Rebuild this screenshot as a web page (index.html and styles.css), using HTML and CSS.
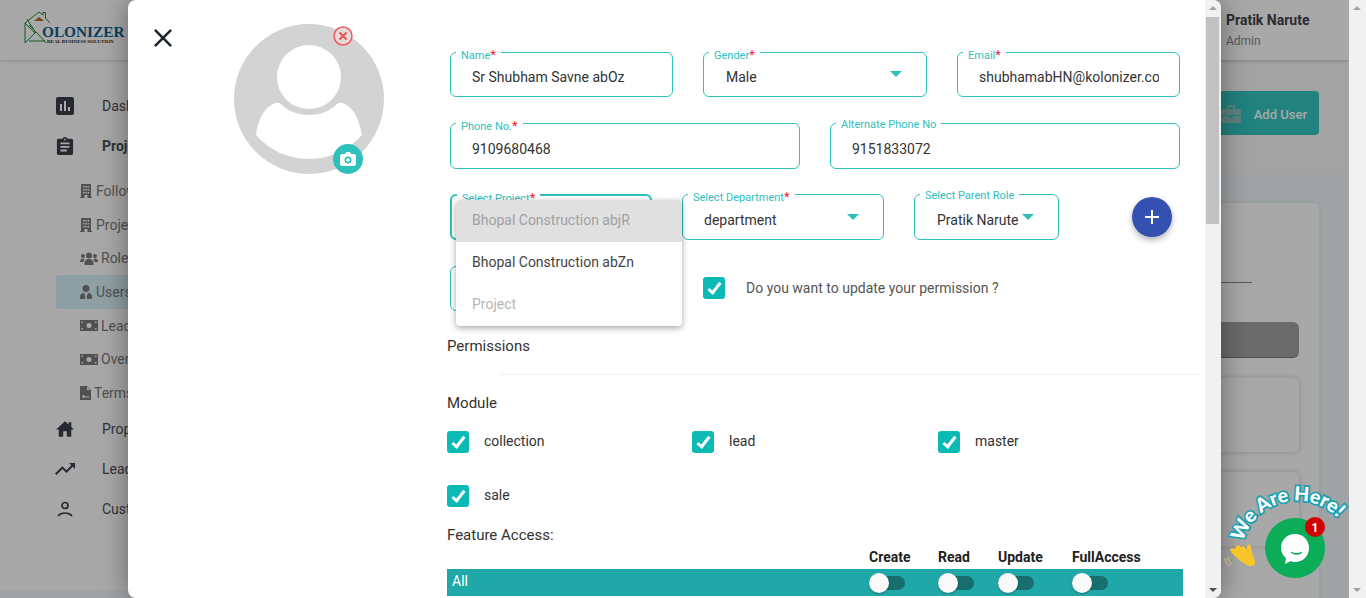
FILE: index.html
```html
<!DOCTYPE html>
<html>
<head>
    <title>Kolonizer - Users</title>
    <link rel="stylesheet" href="styles.css">
</head>
<body>
<svg class="sprite" width="0" height="0">
    <symbol id="i-chart" viewBox="3 3 18 18"><path d="M19 3H5c-1.1 0-2 .9-2 2v14c0 1.1.9 2 2 2h14c1.1 0 2-.9 2-2V5c0-1.1-.9-2-2-2zM9 17H7v-7h2v7zm4 0h-2V7h2v10zm4 0h-2v-4h2v4z"/></symbol>
    <symbol id="i-clip" viewBox="3 1 18 20"><path d="M19 3h-4.18C14.4 1.84 13.3 1 12 1c-1.3 0-2.4.84-2.82 2H5c-1.1 0-2 .9-2 2v14c0 1.1.9 2 2 2h14c1.1 0 2-.9 2-2V5c0-1.1-.9-2-2-2zm-7 0c.55 0 1 .45 1 1s-.45 1-1 1-1-.45-1-1 .45-1 1-1zm2 14H7v-2h7v2zm3-4H7v-2h10v2zm0-4H7V7h10v2z"/></symbol>
    <symbol id="i-home" viewBox="2 3 20 17"><path d="M10 20v-6h4v6h5v-8h3l-3-2.7V4h-3v2.6L12 3 2 12h3v8z"/></symbol>
    <symbol id="i-trend" viewBox="2 6 20 12"><path d="M16 6l2.29 2.29-4.88 4.88-4-4L2 16.59 3.41 18l6-6 4 4 6.3-6.29L22 12V6z"/></symbol>
    <symbol id="i-building" viewBox="0 0 12 14"><path fill-rule="evenodd" d="M1 0h10v13h1v1H0v-1h1zM3 2v1.500h1.500V2zm2.300 0v1.500h1.500V2zm2.300 0v1.500h1.500V2zM3 5v1.500h1.500V5zm2.300 0v1.500h1.500V5zm2.300 0v1.500h1.500V5zM3 8v1.500h1.500V8zm2.300 0v1.500h1.500V8zm2.300 0v1.500h1.500V8zM4.500 11v3h3v-3z"/></symbol>
    <symbol id="i-users" viewBox="0 0 18 13"><circle cx="9" cy="3.500" r="3"/><circle cx="3" cy="4" r="2"/><circle cx="15" cy="4" r="2"/><path d="M4.500 13v-2c0-2.500 2-4 4.500-4s4.500 1.500 4.500 4v2zM0 10c0-2 1-3.500 3-3.500.7 0 1.200.2 1.700.5-.8 1-1.200 2-1.200 3zM18 10c0-2-1-3.500-3-3.500-.7 0-1.200.2-1.700.5.800 1 1.200 2 1.200 3z"/></symbol>
    <symbol id="i-tie" viewBox="0 0 12 14"><circle cx="6" cy="3.500" r="3.500"/><path d="M0 14v-2c0-2.500 1.500-4 4-4l1.300 3.500L4.800 14zM12 14v-2c0-2.500-1.500-4-4-4l-1.300 3.500.5 2.500z"/></symbol>
    <symbol id="i-money" viewBox="0 0 18 11"><path fill-rule="evenodd" d="M0 0h18v11H0zM9 3a2.500 2.500 0 1 0 0 5 2.500 2.500 0 0 0 0-5zM1.500 1.500v1.500h1.500V1.500zm13.500 0v1.500h1.500V1.500zM1.500 8v1.500h1.500V8zm13.500 0v1.500h1.500V8z"/></symbol>
    <symbol id="i-file" viewBox="0 0 11 14"><path fill-rule="evenodd" d="M0 0h7l4 4v10H0zM7 .800V4h3.200zM2 10.500v1h7v-1H5L3.500 8.500z"/></symbol>
</svg>

<div class="page">
    <div class="viewport">
        <div class="app">
            <header class="topbar">
                <svg class="logo" width="104" height="34" viewBox="0 0 104 34">
                    <path d="M1 32V12L15 1l4 3V1.500h2.500V7L26 12" fill="none" stroke="#1d8a3c" stroke-width="1"/>
                    <path d="M1 12l10 10L1 32M5 30h16M5 14l9 9 8 9M3 8l9 14" fill="none" stroke="#1d8a3c" stroke-width="1"/>
                    <path d="M10 10l5-4 5 4z" fill="#a9722a"/>
                    <text x="18" y="26" class="logo-name">OLONIZER</text>
                    <text x="23" y="31.500" class="logo-tag">REAL BUSINESS SOLUTION</text>
                </svg>
                <div class="user-box">
                    <div class="user-name">Pratik Narute</div>
                    <div class="user-role">Admin</div>
                </div>
            </header>
            <div class="app-body">
                <nav class="sidebar">
                    <a class="nav-item"><svg class="nav-icon"><use href="#i-chart"/></svg>Dashboard</a>
                    <a class="nav-item active"><svg class="nav-icon"><use href="#i-clip"/></svg>Projects</a>
                    <a class="sub-item"><svg class="sub-icon narrow"><use href="#i-building"/></svg>Follow Up</a>
                    <a class="sub-item"><svg class="sub-icon narrow"><use href="#i-building"/></svg>Projects</a>
                    <a class="sub-item"><svg class="sub-icon"><use href="#i-users"/></svg>Roles</a>
                    <a class="sub-item current"><svg class="sub-icon narrow"><use href="#i-tie"/></svg>Users</a>
                    <a class="sub-item"><svg class="sub-icon"><use href="#i-money"/></svg>Leads</a>
                    <a class="sub-item"><svg class="sub-icon"><use href="#i-money"/></svg>Overview</a>
                    <a class="sub-item"><svg class="sub-icon file"><use href="#i-file"/></svg>Terms</a>
                    <a class="nav-item"><svg class="nav-icon"><use href="#i-home"/></svg>Properties</a>
                    <a class="nav-item"><svg class="nav-icon trend"><use href="#i-trend"/></svg>Leads</a>
                    <a class="nav-item">
                        <svg class="nav-icon person" viewBox="0 0 18 18" fill="none" stroke="currentColor" stroke-width="1.700"><circle cx="9" cy="5.500" r="3"/><path d="M2 16c2-2.500 4.500-3 7-3s5 .5 7 3"/></svg>
                        Customers
                    </a>
                </nav>
                <main class="main">
                    <div class="toolbar">
                        <button class="add-user">
                            <svg width="20" height="18" viewBox="0 0 20 18" fill="#8fc4bf"><path fill-rule="evenodd" d="M7 0h6l1 1v3h5l1 1v5H0V5l1-1h5V1zm1 2v2h4V2zM0 11h8v2h4v-2h8v6l-1 1H1l-1-1z"/></svg>
                            Add User
                        </button>
                    </div>
                    <section class="panel">
                        <div class="panel-line"></div>
                        <div class="panel-bar"></div>
                        <div class="panel-card"></div>
                        <div class="panel-card"></div>
                    </section>
                </main>
            </div>
        </div>

        <div class="overlay">
            <div class="modal">
                <div class="modal-scroll">
                    <div class="modal-left">
                        <svg class="close-btn" width="18" height="18" viewBox="5 5 14 14" fill="#1d2733"><path d="M19 6.410L17.590 5 12 10.590 6.410 5 5 6.410 10.590 12 5 17.590 6.410 19 12 13.410 17.590 19 19 17.590 13.410 12z"/></svg>
                        <div class="avatar">
                            <svg width="150" height="150" viewBox="0 0 150 150">
                                <circle cx="75" cy="75" r="75" fill="#d3d3d3"/>
                                <circle cx="75" cy="53" r="32" fill="#fff"/>
                                <path d="M22 111c2-14 7-28 20-32 3-1 5 1 7 3 7 6 16 9 26 9s19-3 26-9c2-2 4-4 7-3 13 4 17 18 20 32-13 15-32 24-53 24s-40-9-53-24z" fill="#fff"/>
                            </svg>
                            <span class="avatar-remove">
                                <svg width="20" height="20" viewBox="0 0 20 20"><circle cx="10" cy="10" r="9" fill="#e4dcdc" stroke="#f0595e" stroke-width="1.500"/><path d="M6.500 6.500l7 7m0-7l-7 7" stroke="#e8505a" stroke-width="2"/></svg>
                            </span>
                            <span class="avatar-camera">
                                <svg width="16" height="14" viewBox="0 0 16 14"><path d="M1.500 2H5l1-2h4l1 2h3.500L16 3.500v9L14.500 14h-13L0 12.500v-9z" fill="#fff"/><circle cx="8" cy="8" r="3.500" fill="#2fc0bc"/><path d="M8 6v4M6 8h4" stroke="#fff" stroke-width="1.300"/></svg>
                            </span>
                        </div>
                    </div>

                    <form class="user-form">
                        <div class="form-row first">
                            <fieldset class="field w-name req">
                                <legend>Name<b>*</b></legend>
                                <input class="field-input" type="text" value="Sr Shubham Savne abOz">
                            </fieldset>
                            <fieldset class="field w-gender req">
                                <legend>Gender<b>*</b></legend>
                                <div class="field-select pad-23">Male<span class="caret"></span></div>
                            </fieldset>
                            <fieldset class="field w-email req">
                                <legend>Email<b>*</b></legend>
                                <input class="field-input" type="text" value="shubhamabHN@kolonizer.com">
                            </fieldset>
                        </div>
                        <div class="form-row tall">
                            <fieldset class="field w-half req">
                                <legend>Phone No.<b>*</b></legend>
                                <input class="field-input" type="text" value="9109680468">
                            </fieldset>
                            <fieldset class="field w-half">
                                <legend>Alternate Phone No</legend>
                                <input class="field-input" type="text" value="9151833072">
                            </fieldset>
                        </div>
                        <div class="form-row tall">
                            <fieldset class="field w-select req focused">
                                <legend>Select Project<b>*</b></legend>
                            </fieldset>
                            <fieldset class="field w-select req">
                                <legend>Select Department<b>*</b></legend>
                                <div class="field-select">department<span class="caret"></span></div>
                            </fieldset>
                            <fieldset class="field w-parent">
                                <legend>Select Parent Role</legend>
                                <div class="field-select pad-23">Pratik Narute<span class="caret"></span></div>
                            </fieldset>
                            <button class="fab" type="button">
                                <svg width="24" height="24" viewBox="0 0 24 24" fill="#fff"><path d="M19 13h-6v6h-2v-6H5v-2h6V5h2v6h6v2z"/></svg>
                            </button>
                        </div>
                        <div class="form-row last">
                            <fieldset class="field w-select"><legend></legend></fieldset>
                            <label class="check update-check"><span class="box"></span>Do you want to update your permission ?</label>
                        </div>

                        <h4 class="perm-title">Permissions</h4>
                        <hr class="perm-line">
                        <h4 class="module-title">Module</h4>
                        <div class="module-grid">
                            <label class="check"><span class="box"></span>collection</label>
                            <label class="check"><span class="box"></span>lead</label>
                            <label class="check"><span class="box"></span>master</label>
                            <label class="check"><span class="box"></span>sale</label>
                        </div>
                        <h4 class="feature-title">Feature Access:</h4>
                        <div class="access-head">
                            <span></span><span>Create</span><span>Read</span><span>Update</span><span>FullAccess</span>
                        </div>
                        <div class="access-row">
                            <span class="access-name">All</span>
                            <span class="toggle"></span><span class="toggle"></span><span class="toggle"></span><span class="toggle"></span>
                        </div>
                    </form>

                    <ul class="menu">
                        <li class="selected">Bhopal Construction abjR</li>
                        <li>Bhopal Construction abZn</li>
                        <li class="muted">Project</li>
                    </ul>
                </div>
                <div class="scrollbar inner">
                    <span class="arrow up"></span>
                    <span class="thumb"></span>
                    <span class="arrow down dark"></span>
                </div>
            </div>
        </div>

        <div class="chat-widget">
            <svg width="128" height="105" viewBox="0 0 128 105">
                <path id="chat-arc" d="M21 62A56 56 0 0 1 130 66" fill="none"/>
                <text class="chat-text"><textPath href="#chat-arc">We Are Here!</textPath></text>
                <path d="M8 70c1-2 3-2 5-1l1-3c1-1 3-1 4 0l1 1c1-1 3-1 4 0l2 3v-4c1-2 3-1 4 0l1 7 3 8c1 3-1 5-4 5-2 0-4-1-6-2l-7-5c-2-2-6-5-8-9z" fill="#f7c526"/>
                <path d="M3 78c0 3 2 6 5 8M6 77c0 3 1 5 4 7" fill="none" stroke="#d8c27a" stroke-width="1"/>
                <circle cx="73" cy="68" r="30" fill="#0bad58"/>
                <path d="M73 54c8 0 14 6 14 14s-6 14-14 14c-1 0-3 0-4-1l-6 3 1-6c-3-2-5-6-5-10 0-8 6-14 14-14z" fill="#fff"/>
                <path d="M69 72c3 2 8 2 11 0-1 3-9 3-11 0z" fill="#0bad58" stroke="#0bad58"/>
                <circle cx="93" cy="47" r="10" fill="#d30000"/>
                <text x="93" y="51.500" class="chat-badge">1</text>
            </svg>
        </div>
    </div>
    <div class="scrollbar outer">
        <span class="arrow up"></span>
        <span class="arrow down"></span>
    </div>
</div>
</body>
</html>
```

FILE: styles.css
```css
html, body {
    margin: 0;
    padding: 0;
    height: 598px;
    overflow: hidden;
}

body {
    font-family: Roboto, "Liberation Sans", sans-serif;
    font-size: 14px;
    color: #333;
}

.sprite {
    display: block;
    height: 0;
}

.page {
    display: flex;
    height: 598px;
}

.viewport {
    flex: 1;
    position: relative;
    overflow: hidden;
}

/* page behind the dialog */
.app {
    height: 598px;
    display: flex;
    flex-direction: column;
    background-color: #f1f8fa;
}

.topbar {
    height: 60px;
    flex: none;
    display: flex;
    justify-content: space-between;
    align-items: center;
    background-color: #fff;
    box-shadow: 0 1px 4px rgba(0, 0, 0, 0.2);
    position: relative;
}

.logo {
    margin-left: 24px;
    margin-top: -4px;
}

.logo-name {
    font-family: "Liberation Serif", serif;
    font-size: 15.300px;
    font-weight: bold;
    fill: #0f5f8f;
}

.logo-tag {
    font-family: "Liberation Serif", serif;
    font-size: 5px;
    font-weight: bold;
    fill: #222;
}

.user-box {
    width: 123px;
    margin-bottom: 1px;
}

.user-name {
    font-weight: 700;
    color: #3f4349;
    line-height: 20px;
    margin-bottom: 2px;
}

.user-role {
    font-size: 12px;
    color: #8a8a8a;
    line-height: 18px;
}

.app-body {
    flex: 1;
    display: flex;
    min-height: 0;
}

.sidebar {
    width: 240px;
    height: 530px;
    flex: none;
    box-sizing: border-box;
    padding: 26px 0 0 56px;
    background-color: #fff;
}

.nav-item {
    display: flex;
    align-items: center;
    height: 40px;
    color: #4a4f58;
}

.nav-item.active {
    font-weight: 700;
    margin-bottom: 8.200px;
}

.nav-icon {
    width: 18px;
    height: 18px;
    fill: #3a3f4a;
    margin-right: 28px;
    flex: none;
}

.nav-icon.trend {
    fill: #3a3f4a;
    width: 20px;
    margin: 0 27px 0 -1px;
}

.nav-icon.person {
    fill: none;
    color: #3a3f4a;
}

.sub-item {
    display: flex;
    align-items: center;
    height: 33.700px;
    padding-left: 24px;
    color: #7c7c7c;
    fill: #7c7c7c;
    border-radius: 3px;
}

.sub-item.current {
    background-color: #d9f3fb;
}

.sub-item:nth-child(9) {
    margin-bottom: -1px;
}

.sub-icon {
    width: 18px;
    height: 13px;
    margin-right: 3px;
    flex: none;
}

.sub-icon.narrow {
    width: 12px;
    height: 14px;
    margin-right: 4px;
}

.sub-icon.file {
    width: 11px;
    height: 14px;
}

.main {
    flex: 1;
    padding-right: 30px;
}

.toolbar {
    height: 113px;
    margin-right: -30px;
    padding-right: 30px;
    display: flex;
    justify-content: flex-end;
    align-items: flex-start;
    background-color: #f8f8f8;
}

.add-user {
    display: flex;
    align-items: center;
    justify-content: flex-end;
    gap: 13px;
    height: 44px;
    width: 150px;
    margin-top: 31px;
    padding: 2px 12px 0 0;
    border: none;
    border-radius: 4px;
    background-color: #33c5c0;
    color: #fff;
    font: inherit;
    font-size: 13px;
    font-weight: 500;
}

.panel {
    margin-top: 30px;
    padding: 79px 20px 0 20px;
    height: 480px;
    box-sizing: border-box;
    background-color: #fff;
    border-radius: 4px;
    box-shadow: 0 0 6px rgba(0, 0, 0, 0.08);
}

.panel-line {
    height: 1px;
    margin-right: 47px;
    background-color: #888;
}

.panel-bar {
    height: 36px;
    box-sizing: border-box;
    margin-top: 39px;
    border-radius: 6px;
    background-color: #a3a3a3;
    border-bottom: 1px solid #777;
}

.panel-card {
    height: 74px;
    margin-top: 20px;
    border-radius: 6px;
    background-color: #fff;
    box-shadow: 0 0 6px rgba(0, 0, 0, 0.18);
}

/* dialog */
.overlay {
    position: absolute;
    inset: 0;
    background-color: rgba(0, 0, 0, 0.34);
}

.modal {
    width: 1093px;
    height: 598px;
    margin-left: 128px;
    display: flex;
    background-color: #fff;
    border-radius: 8px;
    overflow: hidden;
    box-shadow: 0 0 28px rgba(0, 0, 0, 0.4);
}

.modal-scroll {
    flex: 1;
    display: flex;
    position: relative;
    overflow: hidden;
}

.modal-left {
    width: 319px;
    flex: none;
    display: flex;
    align-items: flex-start;
    box-sizing: border-box;
    padding: 24px 0 0 26px;
}

.close-btn {
    margin-top: 5px;
}

.avatar {
    position: relative;
    width: 150px;
    height: 150px;
    margin-left: 62px;
}

.avatar svg {
    display: block;
}

.avatar-remove {
    position: absolute;
    left: 99px;
    top: 2px;
}

.avatar-camera {
    position: absolute;
    left: 99px;
    top: 120px;
    width: 30px;
    height: 30px;
    border-radius: 50%;
    background-color: #2fc0bc;
    display: flex;
    align-items: center;
    justify-content: center;
}

.user-form {
    flex: 1;
    padding-top: 52px;
    min-width: 0;
}

.form-row {
    display: flex;
    align-items: flex-start;
    gap: 30px;
    height: 45px;
    margin: 0 0 26px 3px;
}

.form-row.tall {
    height: 46px;
    margin-bottom: 25px;
}

.form-row.tall + .form-row.tall {
    margin-bottom: 26px;
}

.form-row.last {
    margin-bottom: 25px;
}

.field {
    box-sizing: border-box;
    height: 100%;
    min-width: 0;
    margin: 0;
    padding: 0;
    border: 1px solid #2fc0bc;
    border-radius: 6px;
}

/* legend box stays 1px high so the border is not pushed down by it */
.field legend {
    height: 1px;
    margin-left: 5px;
    padding: 0 5px;
    font-size: 11px;
    line-height: 4px;
    color: #2fc0bc;
}

.field.req legend {
    line-height: 8px;
}

.field legend b {
    font-weight: 400;
    font-size: 13px;
    line-height: 0;
    color: #f0203c;
}

.field.focused {
    border-width: 2px;
}

.w-name { width: 223px; }
.w-gender { width: 224px; }
.w-email { width: 223px; }
.w-half { width: 350px; }
.w-select { width: 202px; }
.w-parent { width: 145px; }

.field-input {
    display: block;
    width: 100%;
    box-sizing: border-box;
    height: 36px;
    margin-top: 7px;
    padding: 0 20px 0 21px;
    border: none;
    outline: none;
    background: none;
    font: inherit;
    color: #333;
}

.field-select {
    display: flex;
    align-items: center;
    justify-content: space-between;
    height: 36px;
    margin-top: 7px;
    padding: 0 24px 0 21px;
    color: #333;
}

.first .field-input,
.first .field-select {
    margin-top: 6px;
}

.field-select.pad-23 {
    padding-left: 22px;
}

.caret {
    width: 0;
    height: 0;
    margin-top: -7px;
    border-left: 6px solid transparent;
    border-right: 6px solid transparent;
    border-top: 6px solid #2fc0bc;
}

.fab {
    width: 40px;
    height: 40px;
    margin: 3px 0 0 43px;
    padding: 0;
    border: none;
    border-radius: 50%;
    display: flex;
    align-items: center;
    justify-content: center;
    background-color: #3451b2;
    box-shadow: 0 3px 6px rgba(0, 0, 0, 0.3);
}

.check {
    display: flex;
    align-items: flex-start;
    line-height: 20px;
    color: #333;
}

.box {
    position: relative;
    width: 22px;
    height: 22px;
    flex: none;
    margin-right: 15px;
    border-radius: 3px;
    background-color: #0bbab5;
}

.box::after {
    content: "";
    position: absolute;
    left: 8px;
    top: 3px;
    width: 4px;
    height: 11px;
    border: solid #fff;
    border-width: 0 3px 3px 0;
    transform: rotate(38deg);
}

.update-check {
    align-items: center;
    margin: 11px 0 0 21px;
    color: #555;
}

.update-check .box {
    margin-right: 21px;
}

.perm-title,
.module-title,
.feature-title {
    margin: 0;
    font-size: 15px;
    font-weight: 400;
    line-height: 20px;
    color: #333;
}

.perm-line {
    height: 1px;
    margin: 18px 5px 0 52px;
    border: none;
    background-color: #f2f2f2;
}

.module-title {
    margin-top: 18px;
}

.module-grid {
    display: grid;
    grid-template-columns: 245px 246px 245px;
    row-gap: 32px;
    margin-top: 18px;
}

.feature-title {
    margin-top: 18px;
}

.access-head,
.access-row {
    display: grid;
    grid-template-columns: 422px 69px 60px 74px 1fr;
    width: 736px;
}

.access-head {
    height: 24px;
    align-items: end;
    padding-bottom: 4px;
    box-sizing: border-box;
    font-weight: 700;
    color: #222;
}

.access-row {
    height: 27px;
    align-items: center;
    background-color: #20a8a8;
}

.access-name {
    padding: 0 0 3px 5px;
    color: #fff;
}

.toggle {
    position: relative;
    display: block;
    width: 36px;
    height: 14px;
    border-radius: 7px;
    background-color: #186d6d;
}

.toggle::after {
    content: "";
    position: absolute;
    left: 0;
    top: -3px;
    width: 20px;
    height: 20px;
    border-radius: 50%;
    background-color: #fafafa;
    box-shadow: 0 1px 2px rgba(0, 0, 0, 0.3);
}

/* open select list, lies over the form */
.menu {
    position: absolute;
    left: 328px;
    top: 200px;
    width: 226px;
    margin: 0;
    padding: 0;
    list-style: none;
    background-color: #fff;
    border-radius: 4px;
    overflow: hidden;
    box-shadow: 0 2px 6px rgba(0, 0, 0, 0.35);
}

.menu li {
    height: 42px;
    line-height: 41px;
    padding-left: 16px;
    color: #444;
}

.menu li.selected {
    background-color: #e0e0e0;
    color: #a0a0a0;
}

.menu li.muted {
    color: #b5b5b5;
}

/* scrollbars */
.scrollbar {
    position: relative;
    width: 17px;
    flex: none;
    background-color: #f1f1f1;
}

.scrollbar.inner {
    width: 16px;
}

.thumb {
    position: absolute;
    left: 1px;
    top: 17px;
    width: 13px;
    height: 207px;
    background-color: #c1c1c1;
}

.arrow {
    position: absolute;
    left: 4px;
    width: 0;
    height: 0;
    border-left: 4px solid transparent;
    border-right: 4px solid transparent;
}

.arrow.up {
    top: 6px;
    border-bottom: 4px solid #a3a3a3;
}

.arrow.down {
    bottom: 6px;
    border-top: 4px solid #a3a3a3;
}

.arrow.down.dark {
    border-top-color: #505050;
}

/* chat bubble */
.chat-widget {
    position: absolute;
    left: 1222px;
    top: 480px;
    width: 128px;
    height: 105px;
}

.chat-widget svg {
    display: block;
    overflow: visible;
}

.chat-text {
    font-family: Lato, sans-serif;
    font-size: 19.500px;
    font-weight: 900;
    fill: #fff;
    stroke: #1b9fb2;
    stroke-width: 3.500px;
    paint-order: stroke;
}

.chat-badge {
    font-size: 12px;
    font-weight: 700;
    fill: #fff;
    text-anchor: middle;
}
```
